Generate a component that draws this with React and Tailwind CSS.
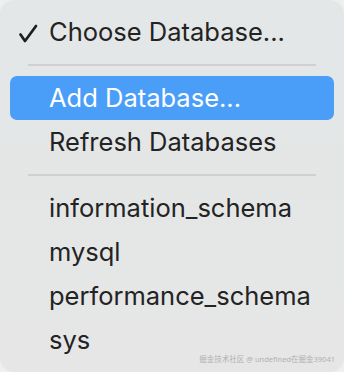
import React from "react";

function Item({ children, active, checked }) {
  return (
    <div
      className={
        "relative flex h-[44px] items-center rounded-[7px] pl-[39px] " +
        (active ? "bg-[#4a9ef8] text-white" : "text-[#232323]")
      }
    >
      {checked && (
        <svg
          className="absolute left-[7px] top-[13px]"
          width="22"
          height="22"
          viewBox="0 0 22 22"
          fill="none"
        >
          <path
            d="M3.5 11.5 L8 18 L19 3"
            stroke="#1e1e1e"
            strokeWidth="2.7"
            strokeLinecap="round"
            strokeLinejoin="round"
          />
        </svg>
      )}
      <span className="leading-none">{children}</span>
    </div>
  );
}

function Sep() {
  return (
    <div className="flex h-[22px] items-center px-[18px]">
      <div className="h-[2px] w-full bg-[#d0d0d0]" />
    </div>
  );
}

export default function App() {
  return (
    <div className="h-[372px] w-[344px] bg-[#efefef]">
      <div
        className="relative h-full w-full rounded-[14px] bg-gradient-to-b from-[#e3e7e7] to-[#e6e6e6] px-[10px] pt-[10px] text-[25.5px]"
        style={{ fontFamily: "Inter, 'Noto Sans', sans-serif" }}
      >
        <Item checked>Choose Database...</Item>
        <Sep />
        <Item active>Add Database...</Item>
        <Item>Refresh Databases</Item>
        <Sep />
        <Item>information_schema</Item>
        <Item>mysql</Item>
        <Item>performance_schema</Item>
        <Item>sys</Item>
        <div
          className="absolute bottom-[9px] right-[9px] text-[7.5px] leading-none text-[#b0b0b0]"
          style={{ fontFamily: "'Noto Sans', 'Noto Sans CJK SC', sans-serif" }}
        >
          掘金技术社区 @ undefined在掘金39041
        </div>
      </div>
    </div>
  );
}
